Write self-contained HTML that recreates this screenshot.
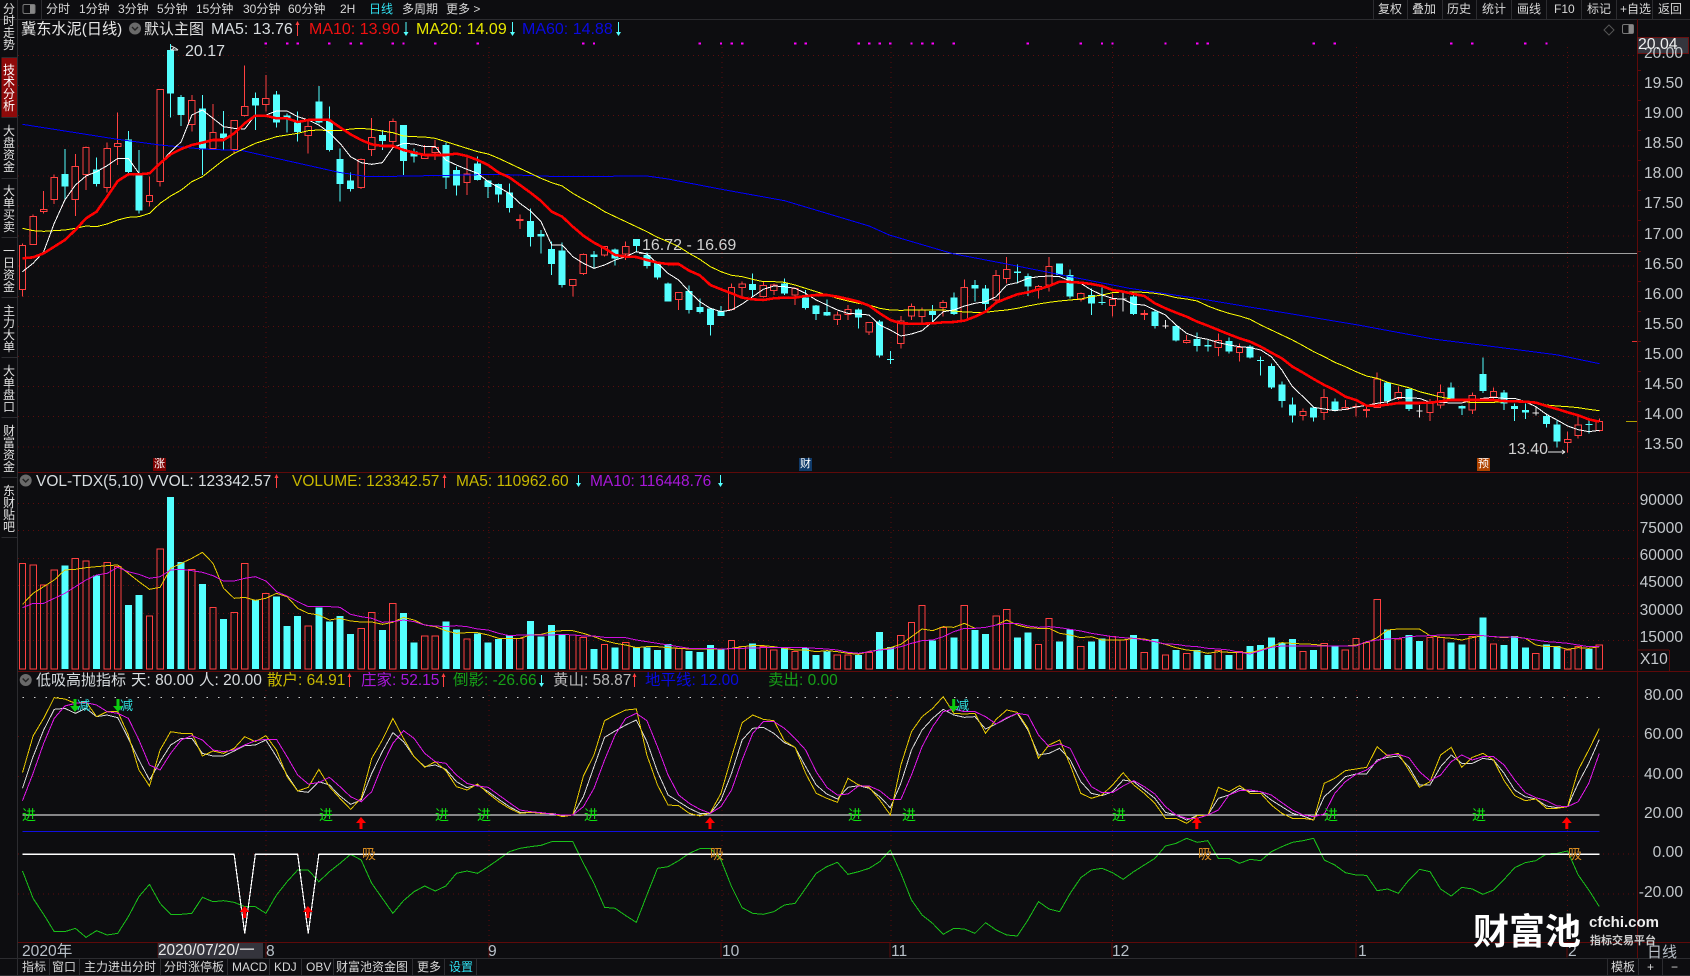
<!DOCTYPE html>
<html lang="zh"><head><meta charset="utf-8"><title>冀东水泥(日线)</title>
<style>
html,body{margin:0;padding:0;background:#0d0d10;overflow:hidden}
#p{position:relative;width:1690px;height:976px;background:#0d0d10;overflow:hidden;font-family:"Liberation Sans","Noto Sans CJK SC",sans-serif;color:#d0d0d0}
svg{position:absolute;left:0;top:0}
svg path{vector-effect:non-scaling-stroke;fill:none}
.c{shape-rendering:crispEdges}
.t{position:absolute;white-space:nowrap;line-height:18px;font-size:16px}
.n{font-size:15.5px}
.m{position:absolute;white-space:nowrap;line-height:16px;font-size:12px;top:1px;color:#d8d8d8;font-family:"Liberation Sans","WenQuanYi Zen Hei","Noto Sans CJK SC",sans-serif}
.b{position:absolute;white-space:nowrap;line-height:16px;font-size:12px;top:959px;color:#d8d8d8;font-family:"Liberation Sans","WenQuanYi Zen Hei","Noto Sans CJK SC",sans-serif}
.a{position:absolute;right:7px;white-space:nowrap;line-height:18px;font-size:15.6px;color:#c4c8cc}
.s{position:absolute;left:2px;width:14px;text-align:center;font-size:12px;line-height:12px;color:#e0e0e0;font-family:"WenQuanYi Zen Hei","Noto Sans CJK SC",sans-serif}
.j{position:absolute;font-size:14px;line-height:16px;color:#10e010;top:807px}
.x{position:absolute;font-size:14px;line-height:16px;color:#d88c20;top:846px}
.d{position:absolute;font-size:13px;line-height:14px;color:#30e0e0;top:699px}
.k{position:absolute;width:13px;height:13px;top:458px;font-size:11px;line-height:13px;text-align:center;color:#fff}
.e{position:absolute;top:943px;line-height:18px;font-size:15.6px;color:#b8c0c8}
.y{color:#c8b800}.r{color:#f01010}.u{color:#0a0ae0}.g{color:#17a017}.p{color:#a818d8}
</style></head><body><div id="p">
<svg width="1690" height="976" viewBox="0 0 1690 976">
<g class="c">
<path stroke="#5e0c0c" stroke-dasharray="1 4" d="M18 55.5H1637M18 85.6H1637M18 115.7H1637M18 145.8H1637M18 175.9H1637M18 206H1637M18 236.1H1637M18 266.2H1637M18 296.3H1637M18 326.4H1637M18 356.5H1637M18 386.6H1637M18 416.7H1637M18 446.8H1637M18 503.3H1637M18 530.7H1637M18 558.3H1637M18 585.7H1637M18 613.3H1637M18 640.7H1637M18 736.7H1637M18 776.7H1637M18 854H1637M18 894H1637M266 47V458M489 47V458M722 47V458M891 47V458M1112.5 47V458M1356.4 47V458M1567.5 47V458M266 497V671M489 497V671M722 497V671M891 497V671M1112.5 497V671M1356.4 497V671M1567.5 497V671M266 690V942M489 690V942M722 690V942M891 690V942M1112.5 690V942M1356.4 690V942M1567.5 690V942"/>
<path stroke="#2c2c30" d="M0 19.5H1690M0 958.5H1690M0 975.5H1690M17.5 0V976M1.5 57.5H17M1.5 117.5H17M1.5 178.5H17M1.5 237.5H17M1.5 297.5H17M1.5 357.5H17M1.5 417.5H17M1.5 477.5H17M1.5 537.5H17M1373.5 0V19M1407.5 0V19M1442.5 0V19M1476.5 0V19M1511.5 0V19M1546.5 0V19M1581.5 0V19M1616.5 0V19M1652.5 0V19M41.5 0V19M49.5 958V975M79.5 958V975M160.5 958V975M227.5 958V975M269.5 958V975M301.5 958V975M333.5 958V975M412.5 958V975M444.5 958V975M476.5 958V975M1607.5 958V975M1638.5 958V975M1662.5 958V975"/>
<path stroke="#5e0a0a" d="M18 472.5H1690M18 671.5H1690M18 942.5H1637M1637.5 19V958M1669.5 650V671M1637.5 650H1669M1642 942.5H1690M266 942.5v15M158 942.5v15M489 942.5v15M721 942.5v15M890 942.5v15M1112 942.5v15M1356 942.5v15M1567 942.5v15M1637 70.5h4M1637 100.5h4M1637 130.5h4M1637 160.5h4M1637 190.5h4M1637 220.5h4M1637 251.5h4M1637 281.5h4M1637 311.5h4M1637 341.5h4M1637 371.5h4M1637 401.5h4M1637 431.5h4"/>
<path stroke="#e03030" d="M1632 341.5h5"/><path stroke="#b0a000" d="M1626 421.5h11"/>
<path stroke="#a0a0a0" d="M639 253.5H1637"/>
</g>
<g transform="translate(22.5,0) scale(10.583,.33333)">
<g class="c">
<path stroke="#ff00ff" stroke-width="2.4" d="M23 128v6M25 128v6M26 128v6M29 128v6M31 128v6M32 128v6M35 128v6M36 128v6M39 128v6M43 128v6M53 128v6M54 128v6M64 128v6M66 128v6M67 128v6M68 128v6M73 128v6M74 128v6M79 128v6M80 128v6M81 128v6M82 128v6M84 128v6M85 128v6M86 128v6M88 128v6M95 128v6M100 128v6M102 128v6M103 128v6M108 128v6M111 128v6M112 128v6M122 128v6M124 128v6M135 128v6M137 128v6M142 128v6M144 128v6"/>
<path stroke="#54ffff" d="M4 447V597M7 472V560M10 393V520M11 450V640M14 132V352M15 285V378M17 285V525M19 333V450M22 278V390M24 273V383M25 340V398M26 335V425M28 258V370M29 320V455M30 445V605M31 517V575M34 390V450M36 375V525M37 445V488M40 428V567M41 500V587M43 470V542M44 540V594M45 550V608M46 550V638M48 625V740M49 690V760M50 725V825M51 728V862M54 753V805M56 745V797M58 717V757M59 757V805M60 785V838M61 848V905M63 857V940M64 895V940M65 925V1007M66 918V948M69 820V890M72 835V885M74 870V928M75 915V960M76 898V948M79 925V985M81 960V1073M82 1053V1092M86 915V970M88 878V945M90 840V905M91 855V930M94 793V850M95 820V888M98 790V825M99 808V895M101 865V945M102 860V915M105 885V945M107 930V985M109 975V1025M111 997V1055M112 1020V1055M114 1012V1060M116 1035V1075M117 1070V1127M118 1090V1167M119 1145V1223M120 1193V1268M122 1220V1265M124 1195V1235M129 1147V1210M131 1165V1233M135 1147V1200M136 1217V1245M138 1072V1179M140 1170V1230M141 1210V1263M142 1210V1257M144 1240V1283M145 1260V1343M148 1260V1300"/>
<path stroke="#54ffff" stroke-width="7" d="M4 522V560M7 508V552M10 418V516M11 525V632M14 150V281M15 291V345M17 325V448M19 400V414M22 294V317M24 283V368M25 346V357M26 368V396M28 304V368M29 363V450M30 477V552M31 541V567M34 405V423M36 375V483M37 455V470M40 435V533M41 510V557M43 490V540M44 541V561M45 552V584M46 578V624M48 663V711M49 702V710M50 747V792M51 752V855M54 763V771M56 748V775M58 717V738M59 765V798M60 787V832M61 850V905M63 873V930M64 921V936M65 925V975M66 933V948M69 852V870M72 850V880M74 892V924M75 916V942M76 936V946M79 928V953M81 965V1067M82 1077V1080M86 933V945M88 893V942M90 855V866M91 865V912M94 815V819M95 828V860M98 790V825M99 825V890M101 885V911M102 906V909M105 890V942M107 935V978M109 978V1022M111 1017V1038M112 1035V1040M114 1023V1055M116 1039V1073M117 1080V1083M118 1098V1163M119 1153V1203M120 1213V1247M122 1223V1253M124 1205V1230M129 1148V1203M131 1167V1227M135 1162V1200M136 1218V1225M138 1122V1173M140 1177V1210M141 1218V1227M142 1230V1238M144 1248V1272M145 1273V1325M148 1272V1275"/>
<path stroke="#e8e8e8" d="M104 875V935M108 960V985M132 1215V1253M143 1220V1247M103.7 897H104.3M107.7 978H108.3M131.7 1233H132.3M142.7 1239H143.3"/>
<path stroke="#ff4040" d="M0 730V890M1 643V733M2 573V640M3 523V612M5 462V648M6 440V570M8 428V578M9 337V495M12 530V620M13 268V560M16 285V395M18 312V445M20 362V460M21 196V350M23 225V335M27 365V460M32 475V567M33 354V468M35 355V438M38 435V477M39 420V480M42 470V585M47 643V687M52 838V890M53 760V825M55 738V770M57 725V780M62 877V930M67 850V930M68 845V895M70 845V892M71 850V885M73 862V915M77 935V975M78 915V960M80 968V1005M83 948V1046M84 910V960M85 922V975M87 900V950M89 838V965M92 810V905M93 771V850M96 855V895M97 771V875M100 878V905M103 880V950M106 930V960M110 1005V1030M113 1000V1068M115 1030V1085M121 1225V1262M123 1167V1260M125 1200V1230M126 1210V1250M127 1215V1253M128 1117V1223M130 1160V1200M133 1197V1263M134 1153V1225M137 1178V1242M139 1162V1200M146 1295V1357M147 1245V1315M149 1255V1295"/>
<path stroke="#ff4040" style="fill:#0d0d10" d="M-.3 736h.6V868h-.6zM.7 650h.6V733h-.6zM1.7 628h.6V634h-.6zM2.7 532h.6V598h-.6zM4.7 500h.6V598h-.6zM5.7 442h.6V524h-.6zM7.7 445h.6V562h-.6zM8.7 430h.6V440h-.6zM11.7 587h.6V605h-.6zM12.7 268h.6V545h-.6zM15.7 301h.6V373h-.6zM17.7 397h.6V445h-.6zM19.7 362h.6V448h-.6zM20.7 320h.6V347h-.6zM22.7 296h.6V314h-.6zM26.7 380h.6V407h-.6zM31.7 478h.6V563h-.6zM32.7 412h.6V448h-.6zM34.7 365h.6V425h-.6zM37.7 464h.6V476h-.6zM38.7 442h.6V458h-.6zM41.7 522h.6V547h-.6zM46.7 658h.6V661h-.6zM51.7 838h.6V856h-.6zM52.7 763h.6V820h-.6zM54.7 740h.6V765h-.6zM56.7 740h.6V762h-.6zM61.7 878h.6V898h-.6zM66.7 862h.6V928h-.6zM67.7 852h.6V862h-.6zM69.7 856h.6V890h-.6zM70.7 855h.6V872h-.6zM72.7 866h.6V885h-.6zM76.7 945h.6V958h-.6zM77.7 928h.6V944h-.6zM79.7 968h.6V996h-.6zM82.7 963h.6V1030h-.6zM83.7 920h.6V948h-.6zM84.7 930h.6V950h-.6zM86.7 907h.6V922h-.6zM88.7 862h.6V960h-.6zM91.7 827h.6V900h-.6zM92.7 808h.6V836h-.6zM95.7 860h.6V868h-.6zM96.7 800h.6V855h-.6zM99.7 880h.6V898h-.6zM102.7 898h.6V916h-.6zM105.7 940h.6V943h-.6zM109.7 1022h.6V1028h-.6zM112.7 1022h.6V1043h-.6zM114.7 1042h.6V1057h-.6zM120.7 1235h.6V1247h-.6zM122.7 1193h.6V1237h-.6zM124.7 1223h.6V1228h-.6zM125.7 1219h.6V1221h-.6zM126.7 1228h.6V1232h-.6zM127.7 1137h.6V1222h-.6zM129.7 1178h.6V1195h-.6zM132.7 1210h.6V1238h-.6zM133.7 1178h.6V1215h-.6zM136.7 1187h.6V1230h-.6zM138.7 1175h.6V1191h-.6zM145.7 1318h.6V1327h-.6zM146.7 1275h.6V1307h-.6zM148.7 1264h.6V1292h-.6z"/>
</g>
<g class="c">
<path stroke="#0000ff" stroke-width="1" d="M0 373 9 418 13 435 17 447 20.8 452 24 475 29.9 517 32.6 530 35 529 45 523 50.7 530 59 528 61 537 65.9 567 72 602 80 678 81.9 705 87.9 761 93 792 98.2 825 104.6 865 111.4 897 126.2 975 133.3 1017 138.3 1037 145.1 1065 149 1091"/>
<path stroke="#ffff00" stroke-width="1" d="M0 685 1 692 2 694 3 692 4 690 5 685 6 678 7 680 8 672 9 660 10 652 11 650 12 640 13 610 14 588 15 570 16 545 17 530 18 505 19 480 20 460 21 445 22 430 23 420 24 410 25 405 26 400 27 392 28 390 29 392 30 392 31 387 32 385 33 388 34 393 35 398 36 408 37 410 38 411 39 415 40 425 41 435 42 445 43 455 44 462 45 475 46 490 47 505 48 520 49 535 50 548 51 558 52 580 53 598 54 615 55 635 56 650 57 665 58 680 59 695 60 712 61 725 62 740 63 760 64 778 65 800 66 815 67 826 68 830 69 838 70 845 71 845 72 847 73 855 74 865 75 875 76 885 77 895 78 903 79 910 80 915 81 925 82 930 83 931 84 930 85 930 86 930 87 930 88 933 89 936 90 937 91 937 92 933 93 930 94 925 95 918 96 912 97 907 98 903 99 900 100 897 101 890 102 885 103 878 104 876 105 876 106 877 107 880 108 885 109 893 110 897 111 903 112 918 113 930 114 940 115 948 116 958 117 975 118 990 119 1005 120 1020 121 1037 122 1055 123 1070 124 1087 125 1100 126 1115 127 1128 128 1135 129 1147 130 1155 131 1163 132 1175 133 1183 134 1191 135 1197 136 1203 137 1208 138 1207 139 1207 140 1205 141 1204 142 1205 143 1206 144 1215 145 1218 146 1220 147 1223 148 1228 149 1232"/>
<path stroke="#ffffff" stroke-width="1" d="M0 815 1 790 2 755 3 670 4 600 5 555 6 528 7 515 8 497 9 475 10 475 11 520 12 520 13 490 14 455 15 425 16 345 17 330 18 355 19 380 20 385 21 387 22 345 23 345 24 333 25 333 26 350 27 360 28 375 29 398 30 430 31 470 32 488 33 493 34 488 35 443 36 430 37 432 38 440 39 440 40 480 41 495 42 508 43 520 44 545 45 562 46 580 47 610 48 633 49 665 50 735 51 735 52 770 53 790 54 805 55 795 56 780 57 770 58 755 59 762 60 790 61 820 62 840 63 875 64 905 65 925 66 935 67 930 68 912 69 890 70 868 71 858 72 860 73 865 74 880 75 900 76 915 77 930 78 940 79 942 80 945 81 975 82 990 83 1008 84 1002 85 992 86 965 87 935 88 930 89 918 90 910 91 905 92 890 93 855 94 848 95 835 96 830 97 828 98 830 99 843 100 850 101 870 102 885 103 895 104 898 105 913 106 915 107 930 108 945 109 975 110 1000 111 1012 112 1018 113 1028 114 1035 115 1040 116 1043 117 1050 118 1070 119 1110 120 1160 121 1190 122 1222 123 1227 124 1232 125 1228 126 1221 127 1216 128 1210 129 1205 130 1192 131 1194 132 1195 133 1207 134 1207 135 1209 136 1209 137 1200 138 1195 139 1192 140 1195 141 1195 142 1205 143 1220 144 1243 145 1260 146 1278 147 1289 148 1295 149 1291"/>
<path stroke="#ff0000" stroke-width="2.6" d="M0 775 1 772 2 760 3 740 4 720 5 690 6 655 7 635 8 590 9 543 10 523 11 523 12 520 13 490 14 463 15 447 16 435 17 428 18 420 19 420 20 400 21 370 22 347 23 347 24 355 25 355 26 366 27 360 28 359 29 360 30 382 31 403 32 420 33 433 34 438 35 438 36 450 37 458 38 465 39 465 40 465 41 461 42 468 43 480 44 495 45 518 46 532 47 555 48 578 49 603 50 635 51 650 52 680 53 707 54 728 55 745 56 765 57 770 58 771 59 780 60 788 61 792 62 792 63 812 64 826 65 855 66 868 67 880 68 893 69 898 70 900 71 895 72 893 73 893 74 888 75 885 76 885 77 890 78 897 79 905 80 917 81 940 82 960 83 970 84 971 85 971 86 970 87 967 88 966 89 962 90 950 91 935 92 908 93 895 94 883 95 877 96 868 97 858 98 845 99 846 100 848 101 852 102 858 103 870 104 875 105 882 106 888 107 910 108 925 109 938 110 950 111 965 112 977 113 990 114 1003 115 1015 116 1025 117 1040 118 1058 119 1075 120 1100 121 1118 122 1137 123 1155 124 1170 125 1190 126 1200 127 1217 128 1217 129 1214 130 1209 131 1209 132 1209 133 1208 134 1204 135 1200 136 1200 137 1200 138 1200 139 1200 140 1203 141 1204 142 1205 143 1208 144 1218 145 1227 146 1237 147 1246 148 1258 149 1265"/>
</g>
<g class="c">
<path stroke="#54ffff" stroke-width="7" d="M4 1697V2007M7 1727V2007M10 1815V2007M11 1785V2007M14 1491V2007M15 1686V2007M17 1752V2007M19 1857V2007M22 1800V2007M24 1790V2007M25 1878V2007M26 1848V2007M28 1823V2007M29 1865V2007M30 1848V2007M31 1902V2007M34 1890V2007M36 1839V2007M37 1928V2007M40 1865V2007M41 1889V2007M43 1901V2007M44 1928V2007M45 1917V2007M46 1905V2007M48 1863V2007M49 1910V2007M50 1875V2007M51 1905V2007M54 1947V2007M56 1943V2007M58 1943V2007M59 1943V2007M60 1950V2007M61 1932V2007M63 1953V2007M64 1956V2007M65 1935V2007M66 1945V2007M69 1930V2007M72 1943V2007M74 1943V2007M75 1965V2007M76 1955V2007M79 1965V2007M81 1896V2007M82 1941V2007M86 1922V2007M88 1913V2007M90 1890V2007M91 1902V2007M94 1913V2007M95 1898V2007M98 1925V2007M99 1888V2007M101 1925V2007M102 1915V2007M105 1905V2007M107 1917V2007M109 1950V2007M111 1950V2007M112 1965V2007M114 1965V2007M116 1938V2007M117 1935V2007M118 1912V2007M119 1927V2007M120 1917V2007M122 1950V2007M124 1940V2007M129 1888V2007M131 1905V2007M132 1923V2007M135 1927V2007M136 1933V2007M138 1852V2007M140 1935V2007M141 1908V2007M142 1943V2007M144 1933V2007M145 1938V2007M148 1947V2007"/>
<path stroke="#ff4040" d="M-.3 1690h.6V2007h-.6zM.7 1695h.6V2007h-.6zM1.7 1755h.6V2007h-.6zM2.7 1710h.6V2007h-.6zM4.7 1675h.6V2007h-.6zM5.7 1683h.6V2007h-.6zM7.7 1687h.6V2007h-.6zM8.7 1700h.6V2007h-.6zM11.7 1848h.6V2007h-.6zM12.7 1647h.6V2007h-.6zM15.7 1708h.6V2007h-.6zM17.7 1822h.6V2007h-.6zM19.7 1837h.6V2007h-.6zM20.7 1690h.6V2007h-.6zM22.7 1780h.6V2007h-.6zM26.7 1878h.6V2007h-.6zM31.7 1885h.6V2007h-.6zM32.7 1837h.6V2007h-.6zM34.7 1810h.6V2007h-.6zM37.7 1908h.6V2007h-.6zM38.7 1908h.6V2007h-.6zM41.7 1917h.6V2007h-.6zM46.7 1915h.6V2007h-.6zM51.7 1905h.6V2007h-.6zM52.7 1912h.6V2007h-.6zM54.7 1933h.6V2007h-.6zM56.7 1927h.6V2007h-.6zM61.7 1945h.6V2007h-.6zM66.7 1921h.6V2007h-.6zM67.7 1940h.6V2007h-.6zM69.7 1940h.6V2007h-.6zM70.7 1950h.6V2007h-.6zM72.7 1955h.6V2007h-.6zM76.7 1965h.6V2007h-.6zM77.7 1965h.6V2007h-.6zM79.7 1958h.6V2007h-.6zM82.7 1906h.6V2007h-.6zM83.7 1867h.6V2007h-.6zM84.7 1816h.6V2007h-.6zM86.7 1883h.6V2007h-.6zM88.7 1816h.6V2007h-.6zM91.7 1848h.6V2007h-.6zM92.7 1828h.6V2007h-.6zM95.7 1933h.6V2007h-.6zM96.7 1855h.6V2007h-.6zM99.7 1940h.6V2007h-.6zM102.7 1910h.6V2007h-.6zM103.7 1920h.6V2007h-.6zM105.7 1958h.6V2007h-.6zM107.7 1965h.6V2007h-.6zM109.7 1960h.6V2007h-.6zM112.7 1952h.6V2007h-.6zM114.7 1955h.6V2007h-.6zM120.7 1955h.6V2007h-.6zM122.7 1930h.6V2007h-.6zM124.7 1950h.6V2007h-.6zM125.7 1915h.6V2007h-.6zM126.7 1927h.6V2007h-.6zM127.7 1798h.6V2007h-.6zM129.7 1917h.6V2007h-.6zM132.7 1912h.6V2007h-.6zM133.7 1912h.6V2007h-.6zM136.7 1910h.6V2007h-.6zM138.7 1932h.6V2007h-.6zM142.7 1960h.6V2007h-.6zM145.7 1950h.6V2007h-.6zM146.7 1940h.6V2007h-.6zM148.7 1935h.6V2007h-.6z"/>
</g>
</g>
<g class="c" transform="translate(22.5,325) scale(10.583,.33333)">
<path stroke="#e6c800" stroke-width="1" d="M0 838 1 805 2 785 3 765 4 735 5 733 6 728 7 725 8 722 9 720 10 745 11 770 12 793 13 787 14 730 15 715 16 700 17 682 18 715 19 790 20 820 21 817 22 826 23 820 24 805 25 815 26 850 27 865 28 870 29 885 30 880 31 888 32 891 33 891 34 898 35 892 36 877 37 885 38 900 39 905 40 917 41 925 42 923 43 923 44 930 45 940 46 940 47 940 48 930 49 928 50 920 51 917 52 917 53 925 54 935 55 947 56 955 57 960 58 968 59 965 60 965 61 968 62 970 63 972 64 972 65 972 66 973 67 970 68 965 69 962 70 962 71 965 72 970 73 975 74 975 75 980 76 977 77 980 78 985 79 988 80 979 81 975 82 968 83 958 84 935 85 912 86 917 87 905 88 907 89 895 90 910 91 907 92 900 93 885 94 900 95 908 96 910 97 910 98 925 99 930 100 938 101 935 102 945 103 945 104 945 105 940 106 942 107 950 108 958 109 968 110 975 111 978 112 985 113 980 114 982 115 983 116 983 117 975 118 965 119 953 120 955 121 957 122 958 123 962 124 963 125 963 126 960 127 953 128 938 129 915 130 912 131 912 132 912 133 932 134 937 135 940 136 945 137 938 138 932 139 935 140 938 141 935 142 940 143 960 144 965 145 965 146 973 147 968 148 970 149 965"/>
<path stroke="#d010e0" stroke-width="1" d="M0 848 1 835 2 835 3 820 4 805 5 785 6 765 7 750 8 745 9 727 10 740 11 748 12 760 13 755 14 735 15 733 16 737 17 742 18 752 19 768 20 768 21 760 22 755 23 768 24 800 25 813 26 830 27 845 28 845 29 845 30 847 31 868 32 875 33 880 34 892 35 890 36 885 37 890 38 900 39 903 40 905 41 902 42 905 43 912 44 915 45 925 46 932 47 930 48 930 49 930 50 930 51 928 52 930 53 933 54 933 55 937 56 938 57 938 58 945 59 950 60 955 61 960 62 965 63 970 64 970 65 970 66 972 70 968 72 968 74 968 76 972 77 975 78 982 79 985 80 980 81 975 82 972 83 965 84 955 85 947 86 945 87 935 88 920 89 910 90 910 91 907 92 900 93 895 94 895 95 903 96 907 97 905 98 908 99 913 100 918 101 925 102 930 103 935 104 938 105 940 106 945 107 950 108 957 109 958 110 963 111 965 112 970 113 972 114 975 115 982 116 987 117 977 118 967 119 963 126 963 127 950 128 945 129 942 130 940 131 935 132 933 133 932 134 930 135 930 136 929 137 928 138 932 139 935 140 936 141 936 142 940 143 945 144 950 145 952 146 955 147 960 148 965 149 965"/>
</g>
<g class="c" transform="translate(22.5,650) scale(10.583,.33333)">
<path stroke="#d0d0d0" stroke-width="1.2" stroke-dasharray="1.5 10" d="M0 142.5H149"/>
<path stroke="#ffffff" stroke-width="1.2" d="M0 495H149"/>
<path stroke="#1010e0" stroke-width="1" d="M0 544H149"/>
<path stroke="#19c019" stroke-width="1" d="M0 663 1 745 2 793 3 845 4 845 5 835 6 862 7 842 8 855 9 850 10 800 11 740 12 703 13 760 14 793 15 793 16 790 17 742 18 755 19 752 20 757 21 770 22 770 23 790 24 735 25 695 26 660 27 660 28 695 29 665 30 640 31 613 32 630 33 700 34 745 35 790 36 752 37 725 38 708 39 723 40 708 41 670 42 663 43 670 44 650 45 628 46 605 47 595 48 590 49 586 50 575 51 575 52 575 53 640 54 700 55 772 56 775 57 797 58 817 59 735 60 655 61 650 62 632 63 610 64 596 65 595 66 630 67 710 68 773 69 790 70 793 71 785 72 765 73 760 74 715 75 670 76 650 77 637 78 673 79 665 80 655 81 635 82 600 83 670 84 750 85 795 86 820 87 853 88 835 89 837 90 850 91 818 92 840 93 855 94 858 95 810 96 755 97 777 98 785 99 730 100 683 101 660 102 655 103 668 104 688 105 665 106 645 107 625 108 588 109 580 110 565 111 577 112 572 113 625 114 625 115 640 116 628 117 632 118 605 119 590 120 577 121 572 122 565 123 630 124 645 125 668 126 675 127 676 128 722 129 717 130 730 131 690 132 658 133 665 134 717 135 738 136 712 137 717 138 733 139 720 140 688 141 653 142 638 143 632 144 612 145 610 146 603 147 675 148 720 149 770"/>
<path stroke="#ffffff" stroke-width="1.2" d="M0 613H20L21 850 22 613H26L27 850 28 613H149"/>
<path stroke="#d8d8d8" stroke-width="1" d="M0 415 1 320 2 240 3 178 4 175 5 190 6 175 7 200 8 195 9 203 10 265 11 330 12 390 13 335 14 285 15 265 16 265 17 310 18 318 19 318 20 303 21 287 22 285 23 270 24 320 25 375 26 423 27 427 28 395 29 405 30 438 31 463 32 450 33 370 34 305 35 248 36 275 37 320 38 350 39 345 40 358 41 395 42 413 43 405 44 425 45 448 46 470 47 487 48 487 49 490 50 490 51 497 52 495 53 440 54 350 55 262 56 243 57 225 58 210 59 275 60 365 61 435 62 455 63 475 64 490 65 490 66 450 67 370 68 270 69 235 70 232 71 250 72 278 73 292 74 350 75 405 76 432 77 447 78 412 79 407 80 415 81 440 82 473 83 400 84 300 85 240 86 205 87 178 88 195 89 202 90 200 91 237 92 222 93 205 94 190 95 240 96 315 97 310 98 295 99 330 100 395 101 430 102 437 103 425 104 390 105 395 106 420 107 445 108 487 109 495 110 510 111 497 112 495 113 445 114 435 115 415 116 425 117 425 118 450 119 470 120 490 121 498 122 510 123 440 124 412 125 380 126 372 127 372 128 330 129 322 130 318 131 350 132 405 133 405 134 350 135 315 136 340 137 340 138 325 139 330 140 370 141 420 142 440 143 447 144 468 145 473 146 470 147 400 148 340 149 268"/>
<path stroke="#e6c800" stroke-width="1" d="M0 368 1 258 2 205 3 143 4 147 5 160 6 155 7 200 8 185 9 185 10 255 11 360 12 408 13 300 14 245 15 250 16 250 17 318 18 303 19 310 20 295 21 260 22 275 23 257 24 300 25 380 26 423 27 412 28 358 29 410 30 445 31 478 32 445 33 325 34 270 35 205 36 265 37 320 38 352 39 335 40 362 41 410 42 420 43 402 44 430 45 455 46 475 47 490 48 487 49 490 50 490 51 500 52 495 53 378 54 315 55 212 56 195 57 180 58 177 59 315 60 405 61 465 62 467 63 490 64 498 65 488 66 430 67 320 68 218 69 195 70 208 71 212 72 273 73 292 74 370 75 430 76 445 77 457 78 385 79 405 80 412 81 450 82 495 83 345 84 245 85 200 86 175 87 140 88 190 89 192 90 190 91 250 92 208 93 180 94 187 95 235 96 325 97 285 98 270 99 345 100 430 101 445 102 435 103 405 104 368 105 405 106 430 107 460 108 505 109 505 110 520 111 497 112 497 113 412 114 425 115 407 116 430 117 430 118 465 119 490 120 505 121 505 122 510 123 400 124 385 125 362 126 357 127 352 128 290 129 318 130 310 131 360 132 412 133 395 134 315 135 292 136 352 137 322 138 310 139 330 140 392 141 437 142 452 143 447 144 475 145 475 146 470 147 360 148 300 149 235"/>
<path stroke="#e018e8" stroke-width="1" d="M0 452 1 370 2 280 3 205 4 168 5 160 6 158 7 165 8 185 9 190 10 205 11 270 12 345 13 360 14 310 15 270 16 257 17 270 18 300 19 305 20 300 21 285 22 272 23 268 24 268 25 320 26 375 27 402 28 398 29 382 30 410 31 440 32 455 33 425 34 345 35 280 36 242 37 265 38 310 39 335 40 340 41 375 42 400 43 408 44 412 45 435 46 458 47 480 48 485 49 488 50 492 51 495 52 495 53 470 54 415 55 330 56 255 57 205 58 190 59 212 60 290 61 375 62 435 63 460 64 478 65 490 66 470 67 420 68 330 69 250 70 215 71 215 72 235 73 265 74 300 75 365 76 412 77 435 78 432 79 408 80 408 81 422 82 448 83 448 84 375 85 290 86 230 87 185 88 177 89 185 90 185 91 200 92 222 93 203 94 190 95 195 96 255 97 290 98 282 99 295 100 360 101 410 102 428 103 428 104 408 105 392 106 410 107 432 108 470 109 495 110 505 111 505 112 495 113 480 114 435 115 422 116 420 117 425 118 435 119 458 120 480 121 495 122 500 123 492 124 430 125 395 126 373 127 360 128 335 129 315 130 313 131 323 132 365 133 392 134 375 135 335 136 315 137 330 138 320 139 320 140 345 141 390 142 428 143 443 144 452 145 468 146 470 147 455 148 400 149 310"/>
</g>
<path d="M171 50h7M171 50l3-2M171 46c2 1 5 2 7 4M1548 452h17M1565 452l-3-2M1565 452l-3 2" stroke="#e8e8e8" stroke-width="1"/>
<path d="M297.5 23V36M276.5 476V488M444.5 476V488M349.5 675V687M443.5 675V687M634.5 675V687" stroke-width="1" stroke="#ff4040" class="c"/>
<path d="M406 22V33M512.5 22V33M618.5 22V33M578.5 475V484M720.5 475V484M541.5 675V684" stroke-width="1" stroke="#54ffff" class="c"/>
<g>
<path style="fill:#ff4040" d="M297.5 21l2 4h-4zM276.5 474l2 4h-4zM444.5 474l2 4h-4zM349.5 673l2 4h-4zM443.5 673l2 4h-4zM634.5 673l2 4h-4z"/>
<path style="fill:#54ffff" d="M406 36l-2.5-4h5zM512.5 36l-2.5-4h5zM618.5 36l-2.5-4h5zM578.5 487l-2.5-4h5zM720.5 487l-2.5-4h5zM541.5 687l-2.5-4h5z"/>
<path style="fill:#ff0000" d="M361 817l5 6h-3.5v6h-3v-6h-3.5zM710 817l5 6h-3.5v6h-3v-6h-3.5zM1196.8 817l5 6h-3.5v6h-3v-6h-3.5zM1566.8 817l5 6h-3.5v6h-3v-6h-3.5zM244.6 906l5 6h-3.5v6h-3v-6h-3.5zM307.9 906l5 6h-3.5v6h-3v-6h-3.5z"/>
<path style="fill:#0ccc10" d="M75 712l-5-6h3.5v-7h3v7h3.5zM118 712l-5-6h3.5v-7h3v7h3.5zM953.7 712l-5-6h3.5v-7h3v7h3.5z"/>
</g>
<circle cx="135" cy="28.5" r="6" fill="#6a6a6a"/><circle cx="25.7" cy="480.5" r="6" fill="#6a6a6a"/><circle cx="25.7" cy="680" r="6" fill="#6a6a6a"/>
<path d="M132 27l3 3 3-3M22.7 479l3 3 3-3M22.7 678.5l3 3 3-3" stroke="#222" stroke-width="1.4"/>
<rect x="23" y="4.5" width="12" height="9" rx="1.5" fill="none" stroke="#777"/><rect x="30" y="5" width="4.5" height="8" fill="#888"/>
<rect x="1622.5" y="24.5" width="11" height="9" rx="1.5" fill="none" stroke="#777"/><rect x="1628.5" y="25" width="4.5" height="8" fill="#888"/>
<path d="M1609 25l5 5-5 5-5-5z" stroke="#555" stroke-width="1"/>
<rect x="1.5" y="58" width="15.5" height="59" fill="#8e0a0a"/>
<rect x="1637.5" y="37.5" width="51" height="16" fill="#35353d" stroke="#6a1010"/>
<rect x="158" y="943" width="105" height="15" fill="#34343c"/>
<rect x="153" y="458" width="13" height="13" fill="#7a0000"/><rect x="799" y="458" width="13" height="13" fill="#0f3a6a"/><rect x="1477" y="458" width="13" height="13" fill="#b04400"/>
</svg>

<div class="m" style="left:46px">分时</div><div class="m" style="left:79px">1分钟</div><div class="m" style="left:118px">3分钟</div><div class="m" style="left:157px">5分钟</div><div class="m" style="left:196px">15分钟</div><div class="m" style="left:243px">30分钟</div><div class="m" style="left:288px">60分钟</div><div class="m" style="left:340px">2H</div><div class="m" style="left:369px;color:#30e0f0">日线</div><div class="m" style="left:402px">多周期</div><div class="m" style="left:446px">更多 &gt;</div>
<div class="m" style="left:1378px">复权</div><div class="m" style="left:1412px">叠加</div><div class="m" style="left:1447px">历史</div><div class="m" style="left:1482px">统计</div><div class="m" style="left:1517px">画线</div><div class="m" style="left:1554px">F10</div><div class="m" style="left:1587px">标记</div><div class="m" style="left:1620px">+自选</div><div class="m" style="left:1658px">返回</div>

<div class="s" style="top:3px">分时走势</div><div class="s" style="top:64px;color:#fff">技术分析</div><div class="s" style="top:125px">大盘资金</div><div class="s" style="top:185px">大单买卖</div><div class="s" style="top:245px">一日资金</div><div class="s" style="top:305px">主力大单</div><div class="s" style="top:365px">大单盘口</div><div class="s" style="top:425px">财富资金</div><div class="s" style="top:485px">东财贴吧</div>

<div class="t" style="left:21px;top:21px;font-size:15.2px;color:#e8e8e8">冀东水泥(日线)</div>
<div class="t" style="left:144px;top:21px;font-size:15px;color:#e0e0e0">默认主图</div>
<div class="t" style="left:211px;top:21px;color:#d8dde0">MA5: 13.76</div>
<div class="t r" style="left:309px;top:21px">MA10: 13.90</div>
<div class="t" style="left:416px;top:21px;color:#e8e800">MA20: 14.09</div>
<div class="t u" style="left:522px;top:21px">MA60: 14.88</div>

<div class="t" style="left:185px;top:43px;color:#d8dde0">20.17</div>
<div class="t" style="left:642px;top:237px;color:#d0d0d0">16.72 - 16.69</div>
<div class="t" style="left:1508px;top:441px;color:#d0d0d0">13.40</div>
<div class="k" style="left:153px;top:458px">涨</div><div class="k" style="left:799px">财</div><div class="k" style="left:1477px">预</div>

<div class="t n" style="left:36px;top:473px;color:#d8dde0">VOL-TDX(5,10) VVOL: 123342.57</div>
<div class="t n y" style="left:292px;top:473px">VOLUME: 123342.57</div>
<div class="t n y" style="left:456px;top:473px">MA5: 110962.60</div>
<div class="t n p" style="left:590px;top:473px">MA10: 116448.76</div>

<div class="t" style="left:36px;top:672px;font-size:15px;color:#d8dde0">低吸高抛指标</div>
<div class="t n" style="left:131px;top:672px;color:#d8dde0">天: 80.00</div>
<div class="t n" style="left:199px;top:672px;color:#d8dde0">人: 20.00</div>
<div class="t n y" style="left:267px;top:672px">散户: 64.91</div>
<div class="t n p" style="left:361px;top:672px">庄家: 52.15</div>
<div class="t n g" style="left:453px;top:672px">倒影: -26.66</div>
<div class="t n" style="left:553px;top:672px;color:#b8b8b8">黄山: 58.87</div>
<div class="t n u" style="left:645px;top:672px">地平线: 12.00</div>
<div class="t n g" style="left:768px;top:672px">卖出: 0.00</div>

<div class="a" style="top:45px;right:7px">20.00</div>
<div class="t" style="left:1638px;top:36px;color:#f0f0f0;font-size:15.8px">20.04</div>
<div class="a" style="top:75px">19.50</div><div class="a" style="top:105px">19.00</div><div class="a" style="top:135px">18.50</div><div class="a" style="top:165px">18.00</div><div class="a" style="top:195px">17.50</div><div class="a" style="top:226px">17.00</div><div class="a" style="top:256px">16.50</div><div class="a" style="top:286px">16.00</div><div class="a" style="top:316px">15.50</div><div class="a" style="top:346px">15.00</div><div class="a" style="top:376px">14.50</div><div class="a" style="top:406px">14.00</div><div class="a" style="top:436px">13.50</div>
<div class="a" style="top:492px">90000</div><div class="a" style="top:520px">75000</div><div class="a" style="top:547px">60000</div><div class="a" style="top:574px">45000</div><div class="a" style="top:602px">30000</div><div class="a" style="top:629px">15000</div>
<div class="t" style="left:1640px;top:651px;color:#c4c8cc;font-size:15.6px">X10</div>
<div class="a" style="top:687px">80.00</div><div class="a" style="top:726px">60.00</div><div class="a" style="top:766px">40.00</div><div class="a" style="top:805px">20.00</div><div class="a" style="top:844px">0.00</div><div class="a" style="top:884px">-20.00</div>

<div class="j" style="left:22px">进</div><div class="j" style="left:319px">进</div><div class="j" style="left:435px">进</div><div class="j" style="left:477px">进</div><div class="j" style="left:584px">进</div><div class="j" style="left:848px">进</div><div class="j" style="left:902px">进</div><div class="j" style="left:1112px">进</div><div class="j" style="left:1324px">进</div><div class="j" style="left:1472px">进</div>
<div class="d" style="left:77px">减</div><div class="d" style="left:120px">减</div><div class="d" style="left:956px">减</div>
<div class="x" style="left:362px">吸</div><div class="x" style="left:710px">吸</div><div class="x" style="left:1198px">吸</div><div class="x" style="left:1568px">吸</div>

<div class="e" style="left:22px">2020年</div><div class="e" style="left:158px;color:#e8e8e8;font-size:15.4px;top:942px">2020/07/20/一</div><div class="e" style="left:266px">8</div><div class="e" style="left:488px">9</div><div class="e" style="left:722px">10</div><div class="e" style="left:891px">11</div><div class="e" style="left:1112px">12</div><div class="e" style="left:1358px">1</div><div class="e" style="left:1568px">2</div><div class="e" style="left:1647px;top:944px;font-size:15px">日线</div>

<div class="t" style="left:1473px;top:911px;font-size:36px;line-height:36px;font-weight:700;color:#fff;font-family:'Noto Sans CJK SC',sans-serif">财富池</div>
<div class="t" style="left:1589px;top:914px;font-size:15px;font-weight:700;color:#eee">cfchi.com</div>
<div class="t" style="left:1590px;top:931px;font-size:11px;font-weight:700;color:#ccc;font-family:'Noto Sans CJK SC',sans-serif">指标交易平台</div>

<div class="b" style="left:22px">指标</div><div class="b" style="left:52px">窗口</div><div class="b" style="left:84px">主力进出分时</div><div class="b" style="left:164px">分时涨停板</div><div class="b" style="left:232px">MACD</div><div class="b" style="left:274px">KDJ</div><div class="b" style="left:306px">OBV</div><div class="b" style="left:336px">财富池资金图</div><div class="b" style="left:417px">更多</div><div class="b" style="left:449px;color:#30e0f0">设置</div><div class="b" style="left:1611px">模板</div><div class="b" style="left:1647px">+</div><div class="b" style="left:1671px">−</div>
</div></body></html>
